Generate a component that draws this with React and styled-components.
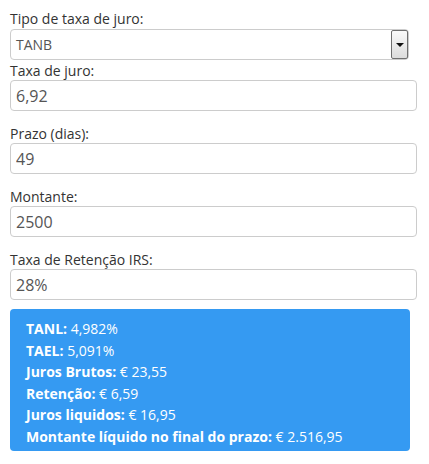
import React from 'react'
import styled, { createGlobalStyle } from 'styled-components';

const GlobalStyle = createGlobalStyle`
  body {
    margin: 0;
    background: #fff;
    font-family: "Open Sans", "DejaVu Sans", sans-serif;
    font-size: 14px;
    color: #333;
  }
`;

const fields = [
  { label: 'Taxa de juro:', value: '6,92' },
  { label: 'Prazo (dias):', value: '49' },
  { label: 'Montante:', value: '2500' },
  { label: 'Taxa de Retenção IRS:', value: '28%' },
];

const results = [
  { name: 'TANL:', value: '4,982%' },
  { name: 'TAEL:', value: '5,091%' },
  { name: 'Juros Brutos:', value: '€ 23,55' },
  { name: 'Retenção:', value: '€ 6,59' },
  { name: 'Juros liquidos:', value: '€ 16,95' },
  { name: 'Montante líquido no final do prazo:', value: '€ 2.516,95' },
];

const App = () => {
  return (
    <Page>
      <GlobalStyle />
      <Label>Tipo de taxa de juro:</Label>
      <Select>
        <span>TANB</span>
        <DropButton>
          <Arrow />
        </DropButton>
      </Select>
      {fields.map((f, i) => (
        <Field key={i} first={i === 0}>
          <Label>{f.label}</Label>
          <Input defaultValue={f.value} />
        </Field>
      ))}
      <Result>
        {results.map((r, i) => (
          <Line key={i}>
            <b>{r.name}</b> {r.value}
          </Line>
        ))}
      </Result>
    </Page>
  );
}

export default App

const Page = styled.div`
  width: 407px;
  padding: 9px 12px 0 10px;
`;

const Label = styled.div`
  line-height: 19px;
  height: 19px;
  color: #333;
`;

const Select = styled.div`
  box-sizing: border-box;
  width: 399px;
  height: 31px;
  margin-top: 1px;
  border: 1px solid #ccc;
  border-radius: 4px;
  display: flex;
  align-items: center;
  justify-content: space-between;
  padding: 0 0 0 5px;
  color: #555;

  span {
    line-height: 20px;
  }
`;

const DropButton = styled.div`
  box-sizing: border-box;
  width: 17px;
  height: 29px;
  border: 1px solid #6f6f6f;
  border-radius: 2px;
  background: linear-gradient(#fafafa, #dcdcdc);
  display: flex;
  align-items: center;
  justify-content: center;
`;

const Arrow = styled.div`
  width: 0;
  height: 0;
  border-left: 4px solid transparent;
  border-right: 4px solid transparent;
  border-top: 4px solid #111;
`;

const Field = styled.div`
  margin-top: ${(props) => (props.first ? '1px' : '13px')};
`;

const Input = styled.input`
  box-sizing: border-box;
  display: block;
  width: 407px;
  height: 31px;
  border: 1px solid #ccc;
  border-radius: 4px;
  padding: 0 5px;
  font-family: inherit;
  font-size: 16px;
  color: #555;
  outline: none;
`;

const Result = styled.div`
  box-sizing: border-box;
  width: 400px;
  margin-top: 9px;
  padding: 9px 16px 4px;
  background: #359af2;
  border-radius: 4px;
  color: #fff;
`;

const Line = styled.div`
  line-height: 21.5px;

  b {
    font-weight: 700;
  }
`;
